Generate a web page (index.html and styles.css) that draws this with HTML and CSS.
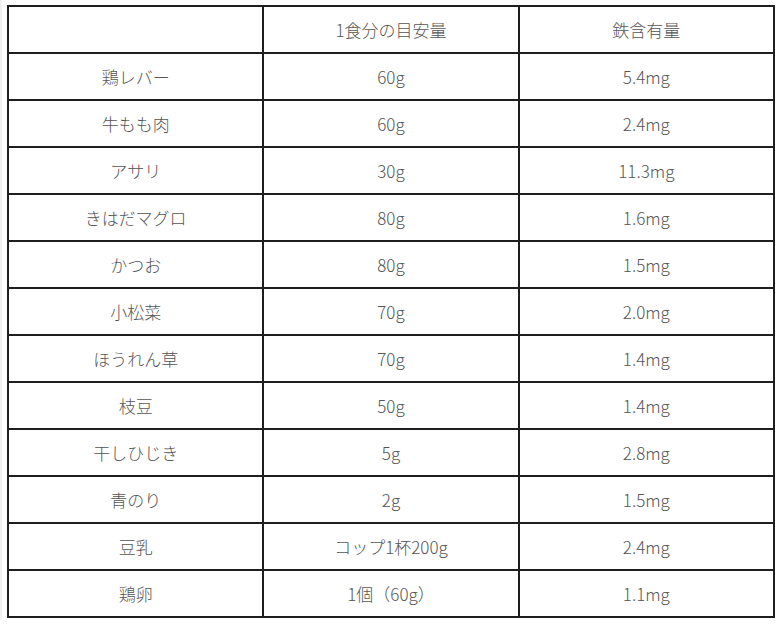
FILE: index.html
```html
<!DOCTYPE html>
<html lang="ja">
<head>
<meta charset="utf-8">
<link rel="stylesheet" href="styles.css">
</head>
<body>
<div class="page">
<table class="iron">
<thead>
<tr><th></th><th>1食分の目安量</th><th>鉄含有量</th></tr>
</thead>
<tbody>
<tr><td>鶏レバー</td><td>60g</td><td>5.4mg</td></tr>
<tr><td>牛もも肉</td><td>60g</td><td>2.4mg</td></tr>
<tr><td>アサリ</td><td>30g</td><td>11.3mg</td></tr>
<tr><td>きはだマグロ</td><td>80g</td><td>1.6mg</td></tr>
<tr><td>かつお</td><td>80g</td><td>1.5mg</td></tr>
<tr><td>小松菜</td><td>70g</td><td>2.0mg</td></tr>
<tr><td>ほうれん草</td><td>70g</td><td>1.4mg</td></tr>
<tr><td>枝豆</td><td>50g</td><td>1.4mg</td></tr>
<tr><td>干しひじき</td><td>5g</td><td>2.8mg</td></tr>
<tr><td>青のり</td><td>2g</td><td>1.5mg</td></tr>
<tr><td>豆乳</td><td>コップ1杯200g</td><td>2.4mg</td></tr>
<tr><td>鶏卵</td><td>1個（60g）</td><td>1.1mg</td></tr>
</tbody>
</table>
</div>
</body>
</html>
```
FILE: styles.css
```css
html, body {
  margin: 0;
  padding: 0;
  background: #fff;
}
.page {
  padding: 5px 0 0 5px;
  border-left: 2px solid #f0f0f0;
  min-height: 620px;
  box-sizing: border-box;
}
.iron {
  border-collapse: collapse;
  width: 768px;
  table-layout: fixed;
  font-family: "Noto Sans CJK JP", "Noto Sans", sans-serif;
  font-size: 17px;
  font-weight: 300;
  color: #555;
}
.iron th, .iron td {
  border: 2px solid #1e1e1e;
  height: 45px;
  padding: 0;
  text-align: center;
  vertical-align: middle;
  font-weight: 300;
}
```
